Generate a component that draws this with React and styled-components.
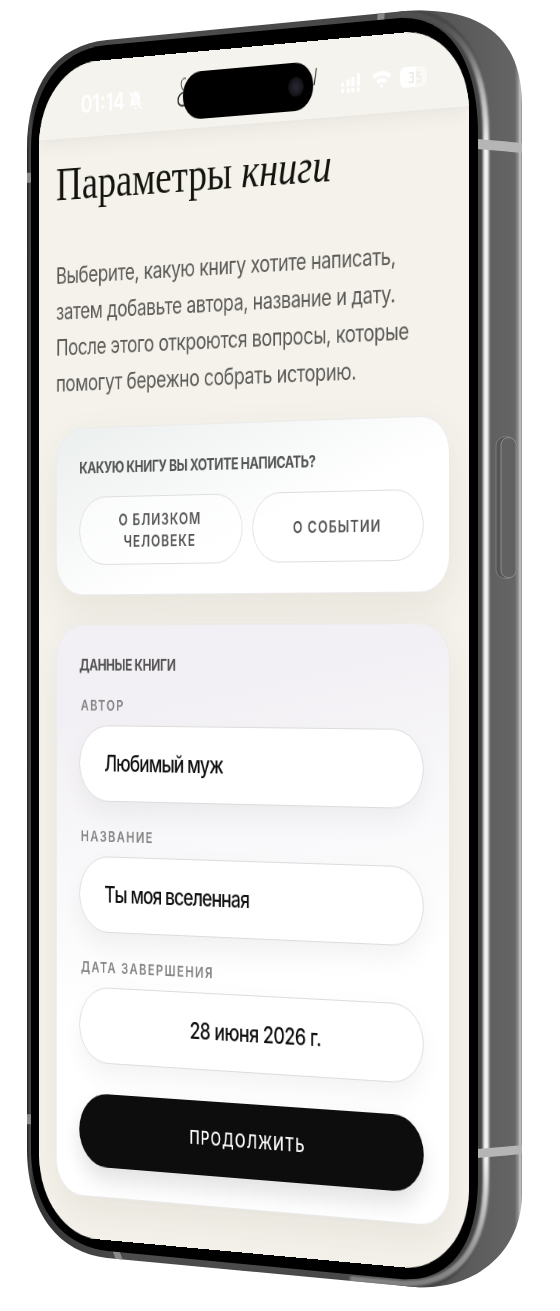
import { useState } from 'react';
import styled, { createGlobalStyle } from 'styled-components';

const bookTypes = [
  { id: 'person', label: 'О близком человеке' },
  { id: 'event', label: 'О событии' },
];

export function App() {
  const [bookType, setBookType] = useState(null);
  const [book, setBook] = useState({
    author: 'Любимый муж',
    title: 'Ты моя вселенная',
    date: '28 июня 2026 г.',
  });

  const handleChange = e => {
    setBook({ ...book, [e.target.name]: e.target.value });
  };

  return (
    <Device>
      <GlobalStyle />
      <PhoneBody />
      <Screen>
        <StatusBar>
          <Time>
            01:14
            <BellOff />
          </Time>
          <Island>
            <LogoEdges />
            <Camera />
          </Island>
          <Indicators />
        </StatusBar>
        <Main>
          <Heading>
            Параметры <em>книги</em>
          </Heading>
          <Intro>
            Выберите, какую книгу хотите написать, затем добавьте автора,
            название и дату. После этого откроются вопросы, которые помогут
            бережно собрать историю.
          </Intro>
          <TypeCard>
            <CardTitle>Какую книгу вы хотите написать?</CardTitle>
            <Options>
              {bookTypes.map(({ id, label }) => (
                <Option
                  key={id}
                  type="button"
                  aria-pressed={bookType === id}
                  onClick={() => setBookType(id)}
                >
                  {label}
                </Option>
              ))}
            </Options>
          </TypeCard>
          <BookCard as="form" onSubmit={e => e.preventDefault()}>
            <CardTitle>Данные книги</CardTitle>
            <Fields>
              <Field>
                <Label htmlFor="author">Автор</Label>
                <Input
                  id="author"
                  name="author"
                  value={book.author}
                  onChange={handleChange}
                />
              </Field>
              <Field>
                <Label htmlFor="title">Название</Label>
                <Input
                  id="title"
                  name="title"
                  value={book.title}
                  onChange={handleChange}
                />
              </Field>
              <Field>
                <Label htmlFor="date">Дата завершения</Label>
                <DateInput
                  id="date"
                  name="date"
                  value={book.date}
                  onChange={handleChange}
                />
              </Field>
            </Fields>
            <Submit type="submit">Продолжить</Submit>
          </BookCard>
        </Main>
      </Screen>
    </Device>
  );
}
export default App;

function PhoneBody() {
  return (
    <BodySvg viewBox="0 0 560 1311" preserveAspectRatio="none" aria-hidden="true">
      <defs>
        <linearGradient id="side" gradientUnits="userSpaceOnUse" x1="27" y1="0" x2="522" y2="0">
          <stop offset="0" stopColor="#222" />
          <stop offset="0.006" stopColor="#4a4a4a" />
          <stop offset="0.012" stopColor="#333" />
          <stop offset="0.2" stopColor="#4c4c4c" />
          <stop offset="0.7" stopColor="#484848" />
          <stop offset="0.94" stopColor="#606060" />
          <stop offset="0.985" stopColor="#656565" />
          <stop offset="0.992" stopColor="#8c8c8c" />
          <stop offset="0.996" stopColor="#c4c4c4" />
          <stop offset="1" stopColor="#8f8f8f" />
        </linearGradient>
        <linearGradient id="shine" gradientUnits="userSpaceOnUse" x1="0" y1="20" x2="0" y2="1285">
          <stop offset="0" stopColor="#777" stopOpacity="0.2" />
          <stop offset="0.05" stopColor="#aaa" />
          <stop offset="0.1" stopColor="#f0f0f0" />
          <stop offset="0.9" stopColor="#f0f0f0" />
          <stop offset="0.95" stopColor="#b5b5b5" />
          <stop offset="1" stopColor="#999" stopOpacity="0.7" />
        </linearGradient>
        <filter id="soft" x="-20%" y="-5%" width="140%" height="110%">
          <feGaussianBlur stdDeviation="1.3" />
        </filter>
        <clipPath id="body">
          <path d="M27 150C27 85 55 45 107 40L405 11C480 6 522 36 522 105V1195C522 1250 478 1292 415 1288L107 1259C60 1254 27 1215 27 1150Z" />
        </clipPath>
      </defs>
      <g clipPath="url(#body)">
        <rect x="20" width="510" height="1311" fill="url(#side)" />
        <path
          d="M400 15C455 14 482 60 482 135V1180C482 1245 455 1290 400 1284"
          fill="none"
          stroke="#444"
          strokeWidth="14"
          filter="url(#soft)"
        />
        <path
          d="M400 14C458 14 486 60 486 135V1180C486 1245 460 1290 395 1284L350 1280"
          fill="none"
          stroke="url(#shine)"
          strokeWidth="6"
          filter="url(#soft)"
        />
        <path d="M477 139L522 143V153L477 149Z" fill="#b5b5b5" />
        <path d="M477 1150L522 1146V1155L477 1159Z" fill="#b5b5b5" />
        <path d="M378 8H385L384 24H377Z" fill="#8a8a8a" />
        <path d="M112 1250L119 1251L124 1264H117Z" fill="#8a8a8a" />
        <path d="M27 173H32V183H27ZM27 1115H32V1125H27Z" fill="#8a8a8a" />
      </g>
      <path
        d="M31 150C31 92 57 50 107 45L400 18C450 16 478 62 478 135V1180C478 1240 455 1284 400 1280L107 1252C60 1247 31 1205 31 1150Z"
        fill="#000"
      />
      <rect x="496" y="437" width="20" height="142" rx="9" fill="#555" stroke="#7c7c7c" />
      <rect x="501" y="438" width="15" height="140" rx="7" fill="#616161" stroke="#8d8d8d" />
    </BodySvg>
  );
}

function BellOff() {
  return (
    <svg width="20" height="22" viewBox="0 0 20 22" fill="currentColor" aria-hidden="true">
      <path d="M10 2c-4 0-6 3-6 6v4l-2 4h16l-2-4V8c0-3-2-6-6-6zM8 18h4a2 2 0 0 1-4 0z" />
      <path d="M2 2l16 18" stroke="#f4f2ec" strokeWidth="4" />
      <path d="M2 2l16 18" stroke="currentColor" strokeWidth="2" />
    </svg>
  );
}

function LogoEdges() {
  return (
    <LogoSvg width="190" height="48" viewBox="0 0 190 48" fill="none" stroke="#171713" aria-hidden="true">
      <path d="M14 6C7 4 6 15 12 19" strokeWidth="1" />
      <path d="M12 20C1 20 1 36 12 33" strokeWidth="1.6" />
      <path d="M183 7L180 24" strokeWidth="1.2" />
    </LogoSvg>
  );
}

function Indicators() {
  return (
    <IndicatorSvg width="110" height="22" viewBox="0 0 110 22" fill="#fff" aria-label="Связь, Wi-Fi, батарея">
      <path d="M1 11h4v4H1zM8 8h4v7H8zM14 6h4v9h-4zM21 3h4v12h-4zM1 17h4v4H1zM8 17h4v4H8zM14 17h4v4h-4zM21 17h4v4h-4z" />
      <path d="M40 7q12-9 24 0l-3 3q-9-6-18 0zM45 12q7-5 14 0l-3 3q-4-3-8 0zM50 17q2-2 4 0l-2 3z" />
      <rect x="75" y="1" width="33" height="20" rx="6" fillOpacity="0.5" />
      <path d="M81 1h13v20H81a6 6 0 0 1-6-6V7a6 6 0 0 1 6-6z" />
      <path d="M86 7h5v4h-4M91 11v5h-5M95 7h5M96 7v4h4v5h-5" fill="none" stroke="#f0eee8" strokeWidth="2" />
    </IndicatorSvg>
  );
}

const GlobalStyle = createGlobalStyle`
  body {
    margin: 0;
    background: #fff;
    overflow-x: hidden;
  }

  * {
    box-sizing: border-box;
  }
`;

const Device = styled.div`
  position: relative;
  max-width: 560px;
  padding: 47px 2px 57px;
  font-family: Inter, 'Noto Sans', sans-serif;
`;

const BodySvg = styled.svg`
  position: absolute;
  inset: 0;
  width: 100%;
  height: 100%;
`;

/* the phone is turned to the left, its right edge is closer to the viewer */
const Screen = styled.div`
  overflow: hidden;
  border-radius: 80px;
  background: #f4f2eb;
  transform: translateX(-33px) perspective(5400px) rotateY(-39.5deg);
`;

const StatusBar = styled.header`
  display: grid;
  grid-template-columns: 1fr auto 1fr;
  align-items: center;
  height: 78px;
  padding: 10px 49px 0;
  background: #f5f3ed;
  box-shadow: 0 2px 20px rgba(60, 58, 50, 0.08);
  border-bottom: 1px solid #eae8e2;
`;

const Time = styled.div`
  display: flex;
  align-items: center;
  gap: 4px;
  padding-left: 8px;
  color: #fff;
  font-size: 24px;
  font-weight: 600;
  line-height: 24px;
`;

const Island = styled.div`
  position: relative;
  display: flex;
  align-items: center;
  justify-content: flex-end;
  width: 169px;
  height: 48px;
  padding-right: 12px;
  border-radius: 24px;
  background: #000;
`;

const LogoSvg = styled.svg`
  position: absolute;
  top: 0;
  left: -10px;
`;

const Camera = styled.span`
  width: 20px;
  height: 20px;
  border-radius: 50%;
  background: radial-gradient(circle, #24242c 20%, #101014 70%);
`;

const IndicatorSvg = styled.svg`
  justify-self: end;
`;

const Main = styled.main`
  padding: 18px 23px 43px;
`;

const Heading = styled.h1`
  margin: 0 0 48px;
  color: #14140f;
  font-family: 'Liberation Serif', serif;
  font-size: 49px;
  font-weight: 400;
  line-height: 56px;
`;

const Intro = styled.p`
  max-width: 474px;
  margin: 0 0 27px;
  color: #5c5b57;
  font-size: 23px;
  line-height: 37px;
  letter-spacing: -0.02em;
`;

const Card = styled.section`
  padding: 30px 31px;
  border: 1px solid #ebebea;
  border-radius: 36px;
  box-shadow: 0 16px 40px rgba(90, 80, 50, 0.08);
`;

const TypeCard = styled(Card)`
  margin-bottom: 30px;
  background: linear-gradient(160deg, #ebefee, #fff 60%);
`;

const BookCard = styled(Card)`
  background: linear-gradient(170deg, #f2f0f4 15%, #fff 60%);
`;

const CardTitle = styled.h2`
  margin: 0 0 20px;
  color: #555;
  font-size: 16px;
  font-weight: 700;
  line-height: 20px;
  letter-spacing: -0.03em;
  text-transform: uppercase;
`;

const Options = styled.div`
  display: grid;
  grid-template-columns: 1fr 1fr;
  gap: 13px;
`;

const Option = styled.button`
  height: 70px;
  padding: 0 32px;
  border: 1px solid #dededd;
  border-radius: 35px;
  background: rgba(255, 255, 255, 0.6);
  color: #555;
  font-family: inherit;
  font-size: 16px;
  font-weight: 600;
  line-height: 22px;
  letter-spacing: 0.08em;
  text-transform: uppercase;
`;

const Fields = styled.div`
  display: grid;
  gap: 26px;
  margin: 22px 0 31px;
`;

const Field = styled.div`
  display: grid;
  gap: 10px;
`;

const Label = styled.label`
  padding-left: 2px;
  color: #858585;
  font-size: 15px;
  font-weight: 600;
  line-height: 20px;
  letter-spacing: 0.12em;
  text-transform: uppercase;
`;

const Input = styled.input`
  width: 100%;
  height: 78px;
  padding: 0 33px;
  border: 1px solid #dcdcdc;
  border-radius: 39px;
  background: #fff;
  box-shadow: 0 12px 28px rgba(0, 0, 0, 0.05);
  color: #111;
  font-family: inherit;
  font-size: 23px;
  font-weight: 500;
  letter-spacing: -0.05em;
`;

const DateInput = styled(Input)`
  padding: 0 24px 0 44px;
  text-align: center;
  letter-spacing: -0.03em;
`;

const Submit = styled.button`
  width: 100%;
  height: 75px;
  border: 0;
  border-radius: 38px;
  background: #0d0d0d;
  box-shadow: 0 12px 24px rgba(0, 0, 0, 0.12);
  color: #fff;
  font-family: inherit;
  font-size: 18px;
  font-weight: 500;
  letter-spacing: 0.08em;
  text-transform: uppercase;
`;
